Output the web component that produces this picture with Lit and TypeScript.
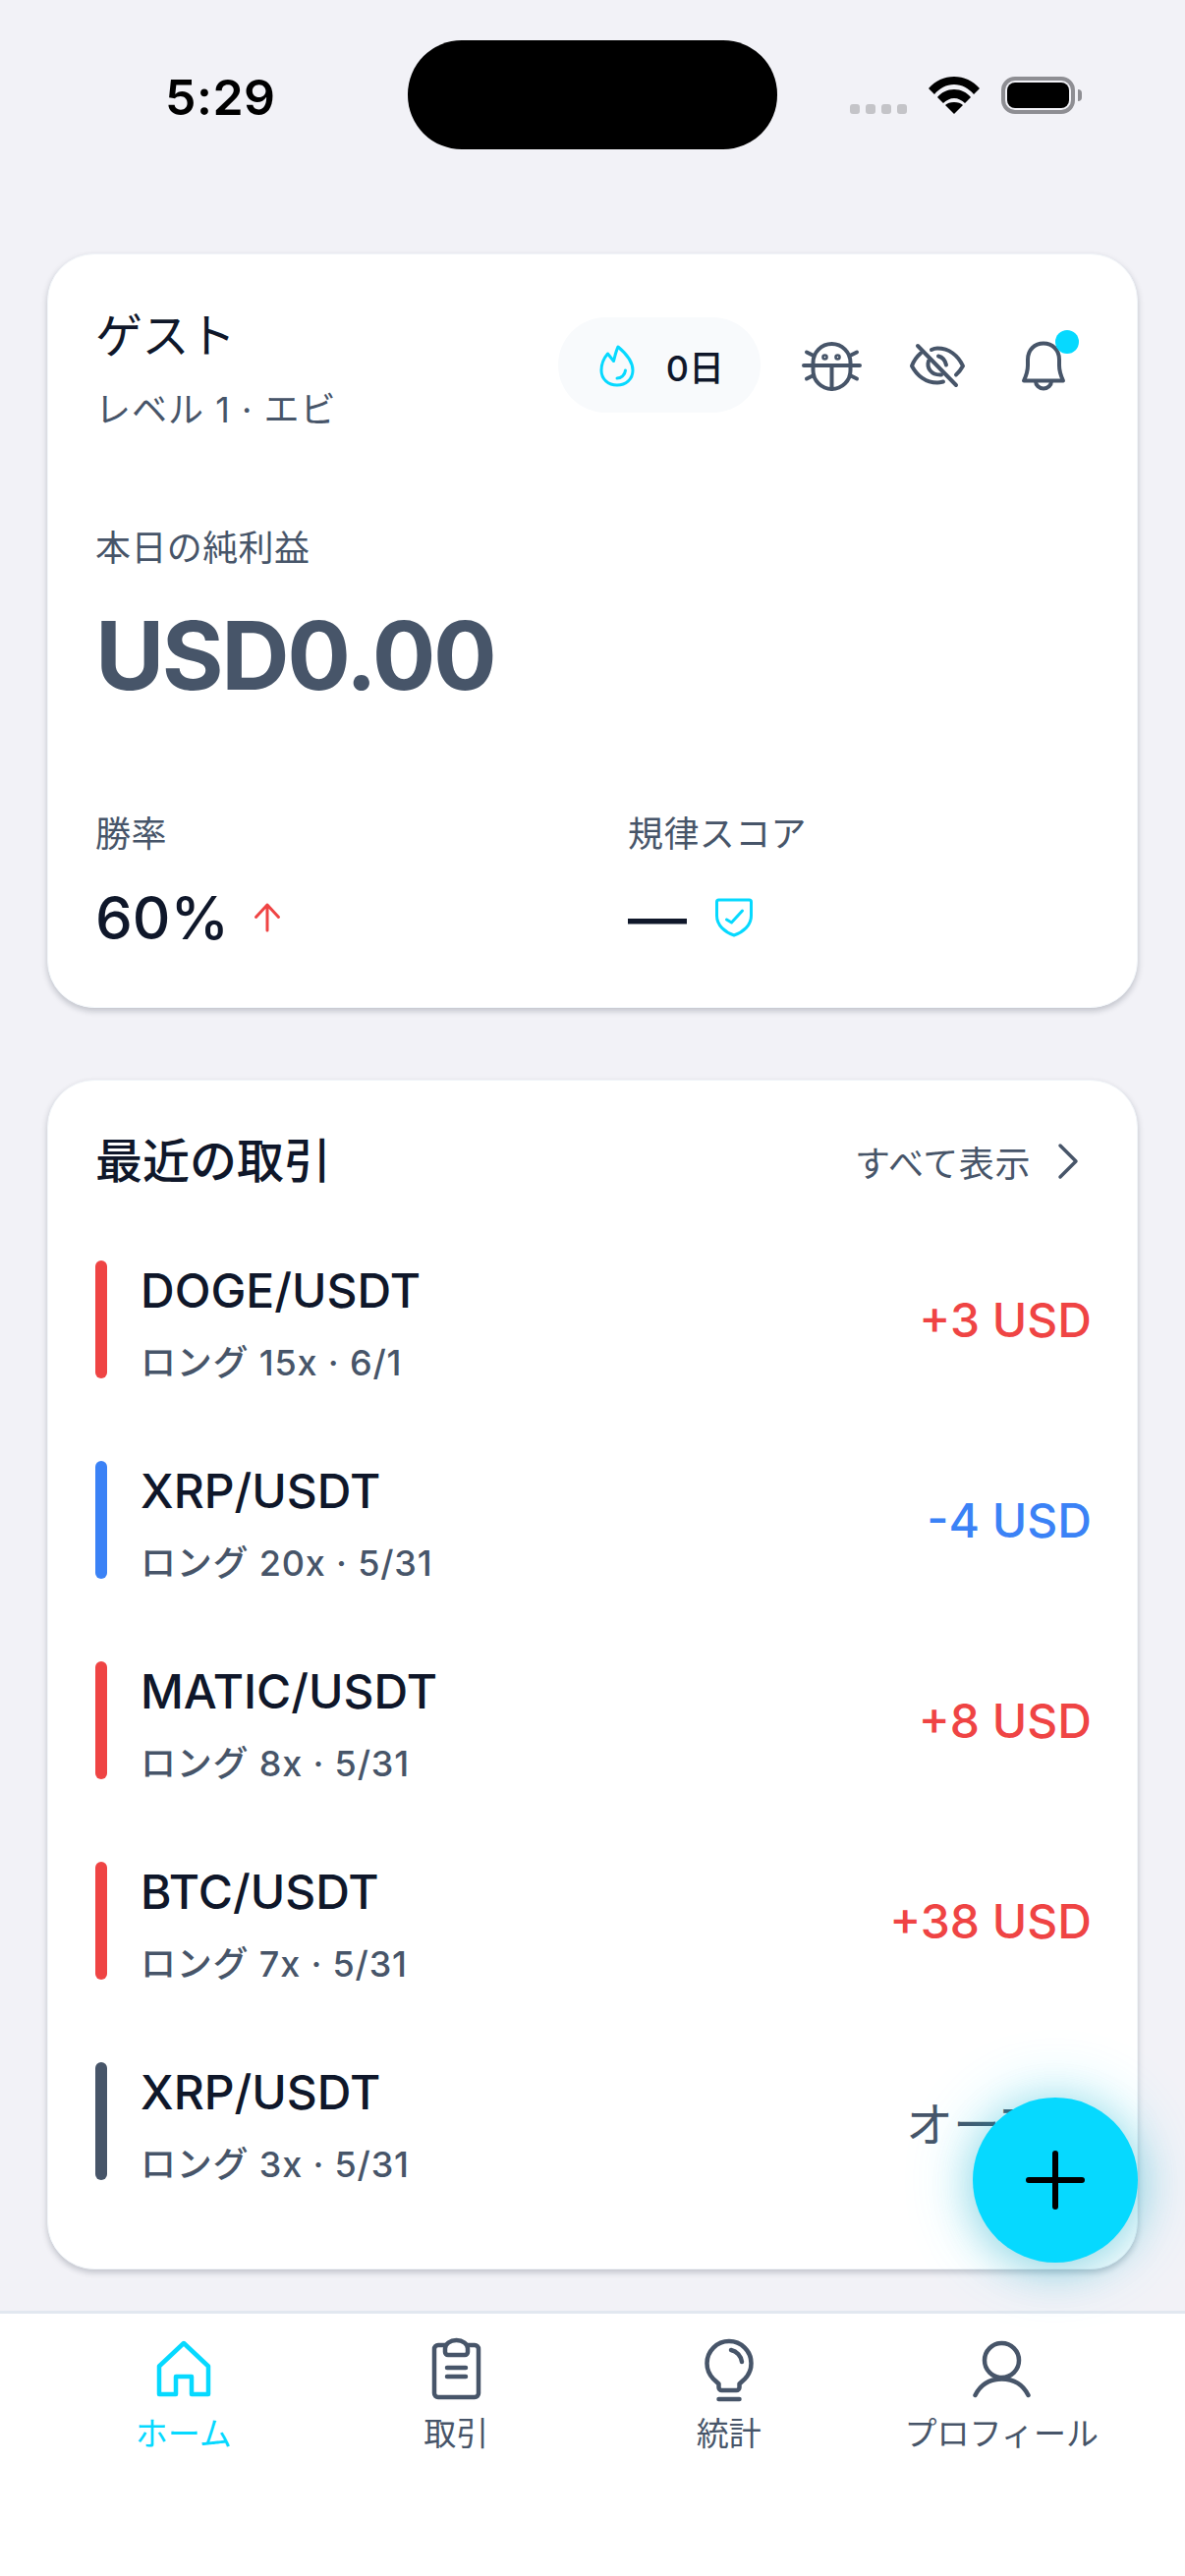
import { LitElement, html, css, svg } from 'lit';
import { customElement } from 'lit/decorators.js';

const trades = [
  { pair: 'DOGE/USDT', meta: 'ロング 15x · 6/1', result: '+3 USD', tone: 'up' },
  { pair: 'XRP/USDT', meta: 'ロング 20x · 5/31', result: '-4 USD', tone: 'down' },
  { pair: 'MATIC/USDT', meta: 'ロング 8x · 5/31', result: '+8 USD', tone: 'up' },
  { pair: 'BTC/USDT', meta: 'ロング 7x · 5/31', result: '+38 USD', tone: 'up' },
  { pair: 'XRP/USDT', meta: 'ロング 3x · 5/31', result: 'オープン', tone: 'open' },
];

const tabIcons = {
  home: svg`<path d="M11 33.500 36 10l25 23.500V62H44V44H28v18H11Z"/>`,
  trades: svg`
    <path d="M25 12h-7a4 4 0 0 0-4 4v45a4 4 0 0 0 4 4h37a4 4 0 0 0 4-4V16a4 4 0 0 0-4-4h-7"/>
    <path d="M25 15.500a11.500 8.500 0 0 1 23 0V19a3 3 0 0 1-3 3H28a3 3 0 0 1-3-3Z"/>
    <path d="M27 35h19M27 44h19"/>`,
  stats: svg`
    <path d="M25.500 51.500 20 46.300a22.500 22.500 0 1 1 32 0l-5.500 5.200V55a3 3 0 0 1-3 3h-15a3 3 0 0 1-3-3Z"/>
    <path d="M38 17a14 14 0 0 1 11 12M25.500 67h21"/>`,
  profile: svg`
    <circle cx="36.500" cy="27.500" r="17.500"/>
    <path d="M9.500 63C15 52 25 46.500 36.500 46.500S58 52 63.500 63"/>`,
};

const tabs = [
  { label: 'ホーム', icon: tabIcons.home, active: true },
  { label: '取引', icon: tabIcons.trades, active: false },
  { label: '統計', icon: tabIcons.stats, active: false },
  { label: 'プロフィール', icon: tabIcons.profile, active: false },
];

@customElement('app-root')
export class AppRoot extends LitElement {
  static styles = css`
    :host {
      display: block;
      position: relative;
      width: 1206px;
      height: 2622px;
      overflow: hidden;
      background: #f2f2f7;
      color: #0f172a;
      font-family: Inter, 'Noto Sans CJK JP', sans-serif;
    }

    svg {
      display: block;
      flex: none;
      fill: none;
      stroke: currentColor;
      stroke-linecap: round;
      stroke-linejoin: round;
    }

    .status {
      display: flex;
      height: 111px;
      padding-top: 41px;
      margin-bottom: 106px;
    }

    .time {
      width: 247px;
      padding: 29px 0 0 168px;
      font-size: 50px;
      line-height: 58px;
      font-weight: 600;
      letter-spacing: 0.5px;
      color: #000;
    }

    .island {
      width: 376px;
      height: 111px;
      border-radius: 55px;
      background: #000;
    }

    .status-icons {
      display: flex;
      align-items: flex-end;
      height: 75px;
      margin-left: 74px;
    }

    .cell {
      display: flex;
      gap: 6px;
    }

    .cell i {
      width: 10px;
      height: 10px;
      border-radius: 3px;
      background: #c4c4c8;
    }

    .wifi {
      margin-left: 22px;
      fill: #000;
      stroke: none;
    }

    .battery {
      display: flex;
      align-items: center;
      margin-left: 22px;
    }

    .battery-shell {
      box-sizing: border-box;
      width: 75px;
      height: 38px;
      padding: 2px;
      border: 4px solid #8e8e93;
      border-radius: 14px;
    }

    .battery-fill {
      height: 100%;
      border-radius: 8px;
      background: #000;
    }

    .battery-nub {
      width: 4px;
      height: 12px;
      margin-left: 3px;
      border-radius: 0 6px 6px 0;
      background: #8e8e93;
    }

    .card {
      box-sizing: border-box;
      margin: 0 48px;
      padding: 48px;
      border: 1px solid #f1f5f9;
      border-radius: 48px;
      background: #fff;
      box-shadow: 0 3px 6px rgba(15, 23, 42, 0.22);
    }

    .summary {
      height: 768px;
      margin-bottom: 73px;
    }

    .head {
      display: flex;
      justify-content: space-between;
      align-items: flex-start;
    }

    .name {
      margin-top: 3px;
      font-size: 48px;
      line-height: 64px;
      letter-spacing: -0.5px;
    }

    .level {
      margin-top: 19px;
      font-size: 36px;
      line-height: 48px;
      letter-spacing: 1px;
      color: #475569;
    }

    .head-actions {
      display: flex;
      align-items: center;
      gap: 36px;
      padding: 16px 11px 0 0;
    }

    .streak {
      display: flex;
      align-items: center;
      gap: 26px;
      height: 97px;
      padding: 0 37px 0 36px;
      border-radius: 49px;
      background: #f8fafc;
      font-size: 36px;
      font-weight: 500;
    }

    .cyan {
      color: #06d9ff;
    }

    .slate {
      color: #475569;
    }

    .bell {
      position: relative;
    }

    .bell i {
      position: absolute;
      top: 0;
      right: 0;
      width: 24px;
      height: 24px;
      border-radius: 50%;
      background: #06d9ff;
    }

    .label {
      font-size: 36px;
      line-height: 48px;
      letter-spacing: 0.4px;
      color: #475569;
    }

    .profit {
      margin-top: 93px;
    }

    .amount {
      margin-top: 27px;
      font-size: 96px;
      line-height: 116px;
      font-weight: 700;
      letter-spacing: -2.4px;
      color: #475569;
    }

    .metrics {
      display: grid;
      grid-template-columns: 1fr 1fr;
      gap: 72px;
      margin-top: 100px;
    }

    .metric-value {
      display: flex;
      align-items: center;
      gap: 24px;
      margin-top: 25px;
      font-size: 60px;
      line-height: 72px;
      font-weight: 500;
    }

    .arrow {
      margin-left: -3px;
      color: #ef4444;
    }

    .recent {
      height: 1211px;
    }

    .recent-head {
      display: flex;
      justify-content: space-between;
      align-items: center;
    }

    .recent-title {
      font-size: 48px;
      line-height: 68px;
      font-weight: 500;
    }

    .see-all {
      display: flex;
      align-items: center;
      gap: 12px;
      font-size: 36px;
      letter-spacing: 0.6px;
      color: #475569;
    }

    .rows {
      display: flex;
      flex-direction: column;
      gap: 84px;
      margin-top: 67px;
    }

    .row {
      display: flex;
      align-items: center;
      height: 120px;
    }

    .bar {
      width: 12px;
      height: 120px;
      margin-right: 34px;
      border-radius: 6px;
    }

    .row-text {
      flex: 1;
      align-self: flex-start;
      padding-top: 2px;
    }

    .pair {
      font-size: 48px;
      line-height: 58px;
      font-weight: 500;
    }

    .meta {
      margin-top: 20px;
      font-size: 36px;
      line-height: 48px;
      font-weight: 500;
      letter-spacing: 0.8px;
      color: #475569;
    }

    .result {
      margin-right: -2px;
      font-size: 48px;
      font-weight: 500;
    }

    .up .bar { background: #ef4444; }
    .up .result { color: #ef4444; }
    .down .bar { background: #3b82f6; }
    .down .result { color: #3b82f6; }
    .open .bar { background: #475569; }
    .open .result { color: #475569; font-weight: 400; }

    .tabbar {
      position: absolute;
      left: 0;
      right: 0;
      bottom: 0;
      box-sizing: border-box;
      display: grid;
      grid-template-columns: repeat(4, 1fr);
      height: 270px;
      padding: 20px 48px 0;
      border-top: 3px solid #e2e8f0;
      background: #fff;
    }

    .tab {
      display: flex;
      flex-direction: column;
      align-items: center;
      gap: 8px;
      font-size: 33px;
      line-height: 44px;
      color: #475569;
    }

    .tab.active {
      color: #06d9ff;
    }

    .fab {
      position: absolute;
      right: 48px;
      bottom: 319px;
      display: flex;
      align-items: center;
      justify-content: center;
      width: 168px;
      height: 168px;
      border-radius: 50%;
      background: #06d9ff;
      color: #000;
      box-shadow: 0 0 70px rgba(6, 217, 255, 0.3), 0 6px 40px rgba(0, 120, 150, 0.3);
    }
  `;

  renderStatusBar() {
    return html`
      <div class="status">
        <div class="time">5:29</div>
        <div class="island"></div>
        <div class="status-icons">
          <div class="cell"><i></i><i></i><i></i><i></i></div>
          <svg class="wifi" width="52" height="38" viewBox="0 0 52 38">
            <path d="M0 12C7 4 16 0 26 0s19 4 26 12l-6 6C41 12 34 8 26 8S11 12 6 18Z"/>
            <path d="M9 21c4-5 10-8 17-8s13 3 17 8l-6 6c-3-3-7-5-11-5s-8 2-11 5Z"/>
            <path d="M26 38 17 29c2-2 5-3 9-3s7 1 9 3Z"/>
          </svg>
          <div class="battery">
            <div class="battery-shell"><div class="battery-fill"></div></div>
            <div class="battery-nub"></div>
          </div>
        </div>
      </div>
    `;
  }

  renderSummary() {
    return html`
      <section class="card summary">
        <div class="head">
          <div>
            <div class="name">ゲスト</div>
            <div class="level">レベル 1 · エビ</div>
          </div>
          <div class="head-actions">
            <div class="streak">
              <svg class="cyan" width="48" height="48" viewBox="0 0 48 48" stroke-width="3">
                <path d="M25 5c6 5 15 14 15 24 0 9-7 15-16 15S8 38 8 29c0-7 3-13 6.500-17l6 7.500C22 14 23 9 25 5Z"/>
                <path d="M24 37c4 0 8-3 8.500-8"/>
              </svg>
              <span>0日</span>
            </div>
            <svg class="slate" width="72" height="72" viewBox="0 0 72 72" stroke-width="4">
              <rect x="17.500" y="14" width="38" height="46" rx="19"/>
              <path d="M8 36h57M36.500 36v24M11 22.500l7 3.500M62 22.500 55 26M11 49.500l7-3.500M62 49.500 55 46"/>
              <circle cx="29.500" cy="27.500" r="1.300"/>
              <circle cx="42.500" cy="27.500" r="1.300"/>
            </svg>
            <svg class="slate" width="72" height="72" viewBox="0 0 72 72" stroke-width="4">
              <path d="M19 23.500C15 27 12 31 10 36.500 15 46 24 53.500 36 53.500c2 0 4-.5 6-1"/>
              <path d="M30 20c2-1 4-1.500 6-1.500 12 0 21 7.500 26 18-2 3.500-4 6.500-7 9"/>
              <path d="M37 26.500c4 1 7 4.500 8 9"/>
              <path d="M27 31.500c-2 6.500 2 14.500 13 14"/>
              <path d="m16 16 39 40"/>
            </svg>
            <div class="bell slate">
              <svg width="72" height="72" viewBox="0 0 72 72" stroke-width="4">
                <path d="M16 51.500C19 45 20 42 20 36v-6c0-10 7-16.500 16-16.500S52 20 52 30v6c0 6 1 9 4 15.500Z"/>
                <path d="M28 52a8 7.500 0 0 0 16 0"/>
              </svg>
              <i></i>
            </div>
          </div>
        </div>

        <div class="profit">
          <div class="label">本日の純利益</div>
          <div class="amount">USD0.00</div>
        </div>

        <div class="metrics">
          <div>
            <div class="label">勝率</div>
            <div class="metric-value">
              <span>60%</span>
              <svg class="arrow" width="36" height="36" viewBox="0 0 36 36" stroke-width="3">
                <path d="M18 31V5M6.500 17.500 18 5l11.500 12.500"/>
              </svg>
            </div>
          </div>
          <div>
            <div class="label">規律スコア</div>
            <div class="metric-value">
              <span>—</span>
              <svg class="cyan" width="48" height="48" viewBox="0 0 48 48" stroke-width="3">
                <path d="M6.500 8a2 2 0 0 1 2-2h31a2 2 0 0 1 2 2v14c0 10-8.500 17-17.500 20C15 39 6.500 32 6.500 22Z"/>
                <path d="m16.500 26 5 3 11-12"/>
              </svg>
            </div>
          </div>
        </div>
      </section>
    `;
  }

  renderRecent() {
    return html`
      <section class="card recent">
        <div class="recent-head">
          <div class="recent-title">最近の取引</div>
          <div class="see-all">
            <span>すべて表示</span>
            <svg class="slate" width="48" height="48" viewBox="0 0 48 48" stroke-width="3.500">
              <path d="m18 8 16 16-16 16"/>
            </svg>
          </div>
        </div>
        <div class="rows">
          ${trades.map(
            (t) => html`
              <div class="row ${t.tone}">
                <div class="bar"></div>
                <div class="row-text">
                  <div class="pair">${t.pair}</div>
                  <div class="meta">${t.meta}</div>
                </div>
                <div class="result">${t.result}</div>
              </div>
            `,
          )}
        </div>
      </section>
    `;
  }

  render() {
    return html`
      ${this.renderStatusBar()} ${this.renderSummary()} ${this.renderRecent()}
      <nav class="tabbar">
        ${tabs.map(
          (tab) => html`
            <div class="tab ${tab.active ? 'active' : ''}">
              <svg width="72" height="72" viewBox="0 0 72 72" stroke-width="4.500">${tab.icon}</svg>
              <span>${tab.label}</span>
            </div>
          `,
        )}
      </nav>
      <div class="fab">
        <svg width="72" height="72" viewBox="0 0 72 72" stroke-width="6">
          <path d="M36 9v54M9 36h54"/>
        </svg>
      </div>
    `;
  }
}
